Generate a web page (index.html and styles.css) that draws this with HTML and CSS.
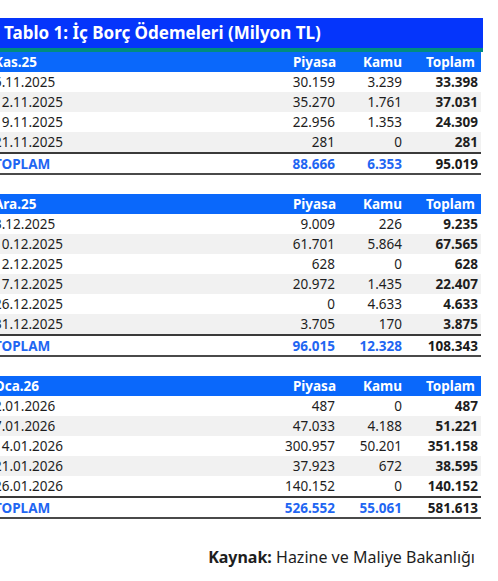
FILE: index.html
```html
<!DOCTYPE html>
<html lang="tr">
<head>
<meta charset="utf-8">
<link rel="stylesheet" href="styles.css">
</head>
<body>
<div class="wrap">
  <div class="title">Tablo 1: İç Borç Ödemeleri (Milyon TL)</div>
  <div class="accent"></div>
  <div class="blocks">
    <div class="block">
      <div class="row head"><span>Kas.25</span><span>Piyasa</span><span>Kamu</span><span>Toplam</span></div>
      <div class="row"><span>5.11.2025</span><span>30.159</span><span>3.239</span><span>33.398</span></div>
      <div class="row alt"><span>12.11.2025</span><span>35.270</span><span>1.761</span><span>37.031</span></div>
      <div class="row"><span>19.11.2025</span><span>22.956</span><span>1.353</span><span>24.309</span></div>
      <div class="row alt"><span>21.11.2025</span><span>281</span><span>0</span><span>281</span></div>
      <div class="row total"><span>TOPLAM</span><span>88.666</span><span>6.353</span><span>95.019</span></div>
    </div>
    <div class="block">
      <div class="row head"><span>Ara.25</span><span>Piyasa</span><span>Kamu</span><span>Toplam</span></div>
      <div class="row"><span>3.12.2025</span><span>9.009</span><span>226</span><span>9.235</span></div>
      <div class="row alt"><span>10.12.2025</span><span>61.701</span><span>5.864</span><span>67.565</span></div>
      <div class="row"><span>12.12.2025</span><span>628</span><span>0</span><span>628</span></div>
      <div class="row alt"><span>17.12.2025</span><span>20.972</span><span>1.435</span><span>22.407</span></div>
      <div class="row"><span>26.12.2025</span><span>0</span><span>4.633</span><span>4.633</span></div>
      <div class="row alt"><span>31.12.2025</span><span>3.705</span><span>170</span><span>3.875</span></div>
      <div class="row total"><span>TOPLAM</span><span>96.015</span><span>12.328</span><span>108.343</span></div>
    </div>
    <div class="block">
      <div class="row head"><span>Oca.26</span><span>Piyasa</span><span>Kamu</span><span>Toplam</span></div>
      <div class="row"><span>2.01.2026</span><span>487</span><span>0</span><span>487</span></div>
      <div class="row alt"><span>7.01.2026</span><span>47.033</span><span>4.188</span><span>51.221</span></div>
      <div class="row"><span>14.01.2026</span><span>300.957</span><span>50.201</span><span>351.158</span></div>
      <div class="row alt"><span>21.01.2026</span><span>37.923</span><span>672</span><span>38.595</span></div>
      <div class="row"><span>26.01.2026</span><span>140.152</span><span>0</span><span>140.152</span></div>
      <div class="row total"><span>TOPLAM</span><span>526.552</span><span>55.061</span><span>581.613</span></div>
    </div>
  </div>
  <div class="source"><b>Kaynak:</b> Hazine ve Maliye Bakanlığı</div>
</div>
</body>
</html>
```

FILE: styles.css
```css
html, body {
  margin: 0;
  padding: 0;
  background: #ffffff;
}
body {
  font-family: "Noto Sans", "Open Sans", sans-serif;
  color: #1e1e1e;
  overflow: hidden;
}
.wrap {
  margin-left: -6px;
  margin-top: 18px;
  width: 489px;
}
.title {
  background: #0535fb;
  color: #ffffff;
  font-weight: 700;
  font-size: 17px;
  height: 30px;
  line-height: 30px;
  padding-left: 10px;
  white-space: nowrap;
}
.accent {
  height: 4px;
  background: #008c80;
}
.blocks {
  display: flex;
  flex-direction: column;
  gap: 19px;
  width: 487px;
}
.row {
  display: grid;
  grid-template-columns: 1fr 66px 66px 76px;
  padding-right: 3px;
  height: 20px;
  align-items: center;
  font-size: 13.5px;
  line-height: 20px;
}
.row span {
  text-align: right;
  white-space: nowrap;
}
.row span:first-child {
  text-align: left;
}
.row span:nth-child(2) {
  padding-right: 1px;
}
.row span:nth-child(4) {
  font-weight: 700;
}
.alt {
  background: #f1f1f1;
}
.head {
  background: #0a68fb;
  color: #ffffff;
  font-weight: 700;
}
.head span:nth-child(2) {
  padding-right: 0;
}
.head span:nth-child(4) {
  padding-right: 3px;
}
.total {
  height: 19px;
  border-top: 2px solid #3a3a3a;
  border-bottom: 2px solid #4a4a4a;
  font-weight: 700;
  color: #1f66f2;
}
.total span:nth-child(4) {
  color: #1a1a1a;
}
.source {
  margin-top: 27px;
  text-align: right;
  padding-right: 8px;
  font-size: 16px;
  color: #1e1e1e;
  white-space: nowrap;
}
.source b {
  font-weight: 700;
}
```
